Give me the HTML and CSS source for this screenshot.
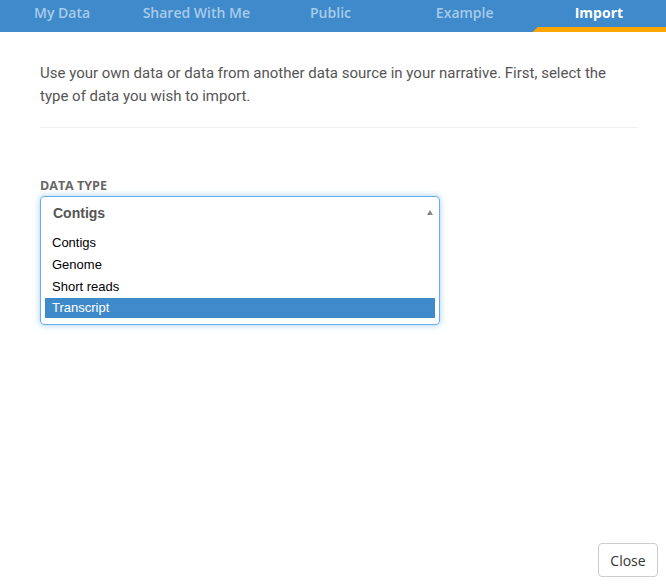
FILE: index.html
```html
<!DOCTYPE html>
<html>
<head>
<meta charset="utf-8">
<link rel="stylesheet" href="styles.css">
</head>
<body>
<div class="tabs">
  <div class="tab">My Data</div>
  <div class="tab">Shared With Me</div>
  <div class="tab">Public</div>
  <div class="tab">Example</div>
  <div class="tab active">Import</div>
</div>
<div class="content">
  <p class="intro">Use your own data or data from another data source in your narrative. First, select the type of data you wish to import.</p>
  <hr class="rule">
  <div class="label">DATA TYPE</div>
  <div class="select">
    <div class="select-head">
      <span class="current">Contigs</span>
      <span class="arrow"></span>
    </div>
    <ul class="options">
      <li class="opt">Contigs</li>
      <li class="opt">Genome</li>
      <li class="opt">Short reads</li>
      <li class="opt selected">Transcript</li>
    </ul>
  </div>
</div>
<div class="footer">
  <button class="close">Close</button>
</div>
</body>
</html>
```
FILE: styles.css
```css
html, body {
  margin: 0;
  padding: 0;
  background: #fff;
  height: 100%;
}
body {
  display: flex;
  flex-direction: column;
  width: 666px;
  height: 584px;
  overflow: hidden;
}
.tabs {
  display: flex;
  height: 32px;
  margin-left: -5px;
  background: #3f8acb;
  font-family: "Open Sans", sans-serif;
  font-size: 14px;
}
.tab {
  flex: 1;
  position: relative;
  text-align: center;
  line-height: 25px;
  color: #a9cbea;
  font-weight: 600;
}
.tab.active {
  color: #fff;
  font-weight: 700;
}
.tab.active::after {
  content: "";
  position: absolute;
  left: 1px;
  right: 0;
  bottom: 0;
  height: 5px;
  background: #ffa500;
  clip-path: polygon(5px 0, 100% 0, 100% 100%, 0 100%);
}
.content {
  flex: 1;
  padding: 0 29px 0 40px;
}
.intro {
  margin: 30px 0 0;
  font-family: Roboto, sans-serif;
  font-size: 15px;
  line-height: 23px;
  color: #555;
}
.rule {
  margin: 19px 0 0;
  border: 0;
  border-top: 1px solid #eee;
  height: 0;
}
.label {
  margin-top: 50px;
  font-family: "Open Sans", sans-serif;
  font-weight: 700;
  font-size: 12.5px;
  line-height: 16px;
  color: #666;
}
.select {
  margin-top: 2px;
  width: 398px;
  border: 1px solid #66afe9;
  border-radius: 4px;
  box-shadow: 0 0 6px rgba(102, 175, 233, 0.6);
  font-family: "Liberation Sans", Arial, sans-serif;
}
.select-head {
  display: flex;
  align-items: center;
  justify-content: space-between;
  height: 31px;
  padding: 0 6px 0 12px;
}
.current {
  font-weight: 700;
  font-size: 14px;
  color: #555;
}
.arrow {
  width: 0;
  height: 0;
  border-left: 3px solid transparent;
  border-right: 3px solid transparent;
  border-bottom: 5px solid #888;
}
.options {
  list-style: none;
  margin: 0;
  padding: 4px 4px 6px;
}
.opt {
  height: 22px;
  line-height: 22px;
  padding-left: 7px;
  font-size: 13px;
  color: #000;
}
.opt.selected {
  background: #3f8acb;
  color: #fff;
  height: 20px;
  line-height: 20px;
}
.footer {
  display: flex;
  justify-content: flex-end;
  padding: 0 8px 7px 0;
}
.close {
  width: 60px;
  height: 34px;
  border: 1px solid #ccc;
  border-radius: 4px;
  background: #fff;
  font-family: "Open Sans", sans-serif;
  font-size: 14px;
  color: #333;
  padding: 0;
}
```
